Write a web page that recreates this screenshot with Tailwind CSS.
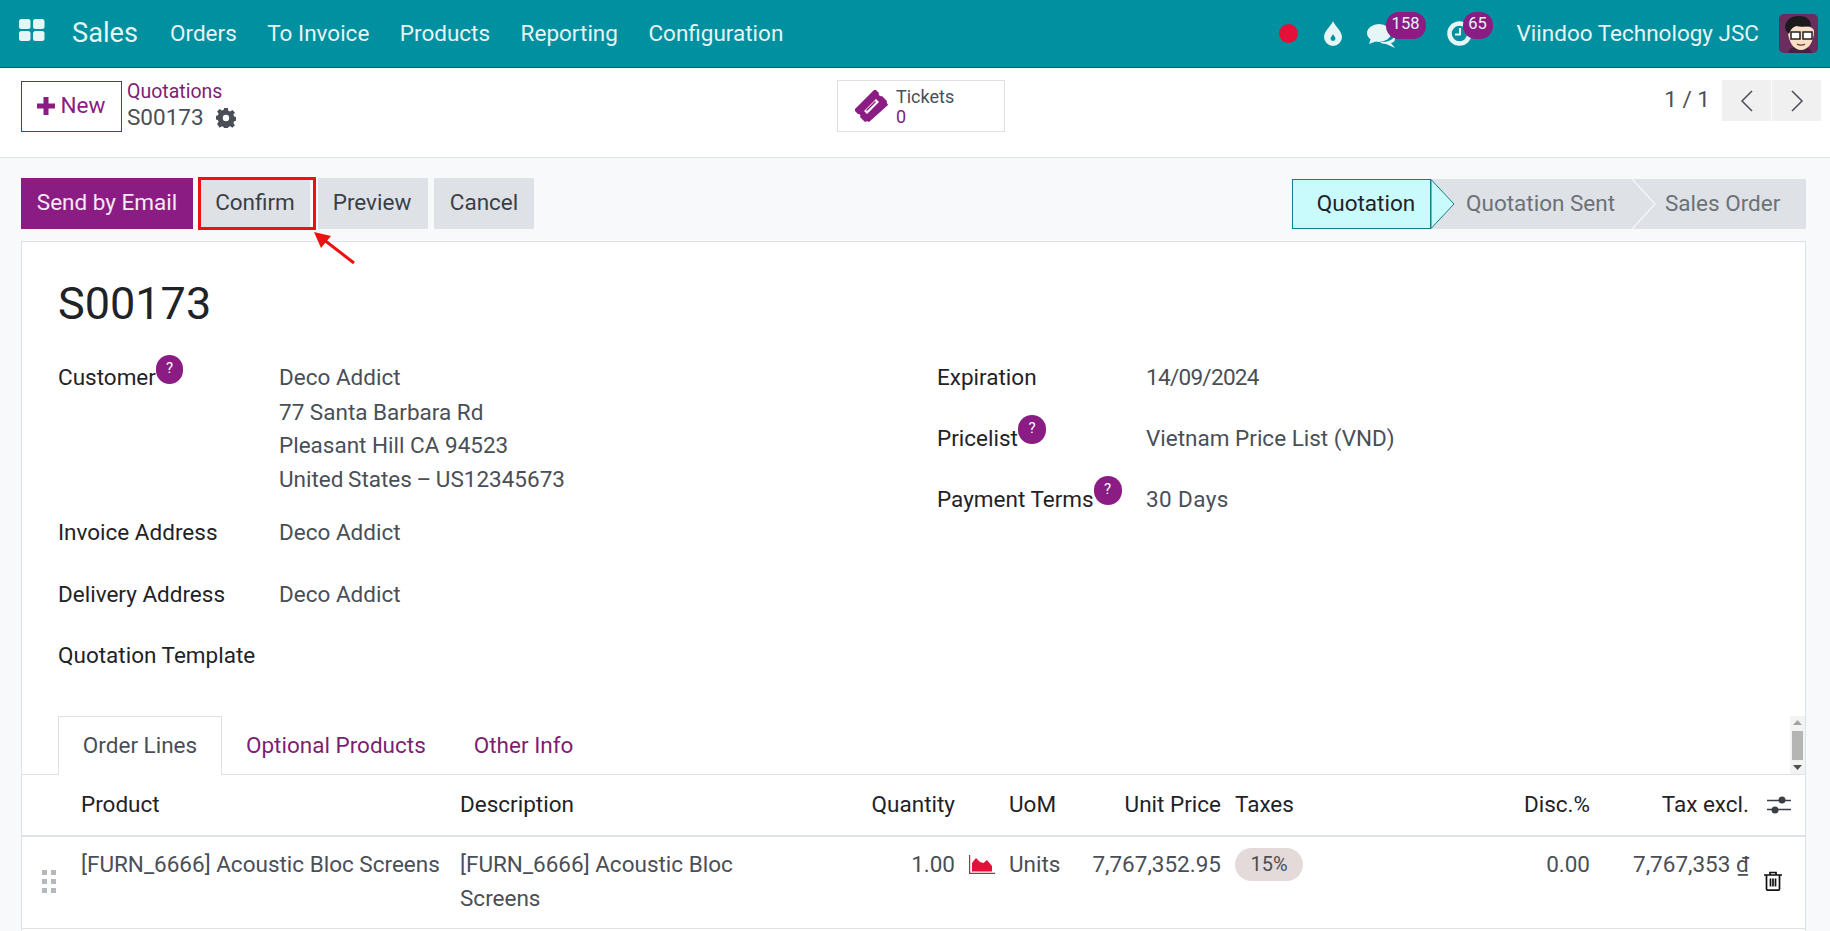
<!DOCTYPE html>
<html lang="en">
<head>
    <meta charset="UTF-8">
    <title>S00173 - Sales</title>
    <script src="https://cdn.jsdelivr.net/npm/@tailwindcss/browser@4"></script>
</head>
<body class="bg-[#f8f9fa] font-['Roboto',sans-serif] text-[22.5px] text-[#4a4f57] overflow-hidden h-[931px]">
    <!-- top menu -->
    <nav class="h-[68px] bg-[#00909f] border-b border-[#00606b] flex items-center text-[#e6f5f6]">
        <svg class="ml-[19px] w-[26px] h-[22px] -mt-[8px]" viewBox="0 0 26 22" fill="currentColor">
            <rect x="0" y="0" width="11.5" height="10" rx="2.5"/><rect x="14" y="0" width="11.5" height="10" rx="2.5"/>
            <rect x="0" y="12" width="11.5" height="10" rx="2.5"/><rect x="14" y="12" width="11.5" height="10" rx="2.5"/>
        </svg>
        <span class="ml-[27px] text-[27.2px]">Sales</span>
        <span class="ml-[32px]">Orders</span>
        <span class="ml-[30.5px]">To Invoice</span>
        <span class="ml-[30.5px]">Products</span>
        <span class="ml-[30.5px]">Reporting</span>
        <span class="ml-[30.5px]">Configuration</span>
        <span class="ml-auto w-[19px] h-[19px] rounded-full bg-[#e4103a]"></span>
        <svg class="ml-[26px] w-[18px] h-[25px] -mt-[1px]" viewBox="0 0 18 25" fill="currentColor"><path fill-rule="evenodd" d="M9 0c1 4 9 10 9 16a9 9 0 0 1-18 0C0 10 8 4 9 0zm0 13c-.5 1.500-2.500 3-2.500 4.500a2.500 2.500 0 0 0 5 0C11.500 16 9.500 14.500 9 13z"/></svg>
        <div class="relative ml-[25px] w-[30px] h-[26px] mt-[4px]">
            <svg class="w-[30px] h-[26px]" viewBox="0 0 30 26" fill="currentColor"><ellipse cx="12" cy="10" rx="12" ry="9"/><path d="M4 15l-2 6 8-3z"/><path d="M27 13c2 3 1 6-3 7l4 5-9-4c-3 0-5-1-6-2 8 0 13-2 14-6z"/></svg>
            <span class="absolute left-[19px] -top-[11px] w-[40px] h-[27px] rounded-[13px] bg-[#8a1c84] text-[16.5px] leading-[23px] text-center">158</span>
        </div>
        <div class="relative ml-[50px] w-[25px] h-[25px] mt-[-1px]">
            <svg class="w-[25px] h-[25px]" viewBox="0 0 25 25" fill="none" stroke="currentColor"><circle cx="12.500" cy="12.500" r="10" stroke-width="4.500"/><path d="M13 7v6.500H8" stroke-width="2"/></svg>
            <span class="absolute left-[16px] -top-[9px] w-[30px] h-[27px] rounded-[13px] bg-[#8a1c84] text-[16.5px] leading-[23px] text-center">65</span>
        </div>
        <span class="ml-[45px]">Viindoo Technology JSC</span>
        <svg class="ml-[20px] mr-[12px] w-[39px] h-[39px] rounded-[5px]" viewBox="0 0 39 39">
            <rect width="39" height="39" fill="#6b2c5e"/>
            <path d="M9 39c1-5 6-7 12-7s11 2 12 7z" fill="#4a2040"/>
            <path d="M9 17c0 11 6 19 13 19s13-8 13-19c0-7-26-7-26 0z" fill="#f8dfc6"/>
            <path d="M6 13C7 5 13 2 20 2c7 0 12 3 12 10-5 1-11 1-15 0-3 1-5 3-7 8-2-2-4-4-4-7z" fill="#1d1a1e"/>
            <rect x="12" y="18" width="9" height="7" fill="#fff" stroke="#222" stroke-width="1.500"/>
            <rect x="24" y="18" width="9" height="7" fill="#fff" stroke="#222" stroke-width="1.500"/>
            <path d="M18 30c2 1.500 6 1.500 8 0" fill="none" stroke="#6b3a2a" stroke-width="1.200"/>
        </svg>
    </nav>

    <!-- control panel -->
    <div class="h-[90px] bg-white border-b border-[#dee2e6] flex items-start pl-[21px] pr-[9px]">
        <button class="mt-[13px] w-[101px] h-[51px] border border-[#8a1c84] text-[#8a1c84] flex items-center justify-center gap-[6px] pb-[2px]">
            <svg class="w-[18px] h-[18px] -ml-[1px]" viewBox="0 0 18 18" fill="currentColor"><path d="M6.500 0h5v6.500H18v5h-6.500V18h-5v-6.500H0v-5h6.500z"/></svg>
            New
        </button>
        <div class="ml-[5px] mt-[9px] w-[710px]">
            <div class="text-[#7c1f72] text-[19.5px] leading-[28px] pt-[1px]">Quotations</div>
            <div class="flex items-center gap-[12px] leading-[27px] -mt-[2px]">S00173
                <svg class="w-[20px] h-[20px] text-[#4a4f57]" viewBox="0 0 20 20" fill="currentColor"><path fill-rule="evenodd" d="M8.200 0h3.600l.5 2.700 1.800.8L16.400 2l2.500 2.500-1.500 2.300.8 1.800 2.700.5v3.600l-2.700.5-.8 1.800 1.500 2.300-2.500 2.500-2.300-1.500-1.800.8-.5 2.700H8.200l-.5-2.700-1.800-.8-2.300 1.500L1.100 16l1.500-2.300-.8-1.800L-.9 11.400V8l2.700-.5.8-1.800L1.100 3.400 3.600 1l2.300 1.500 1.800-.8zM10 6.800a3.200 3.200 0 1 0 0 6.400 3.200 3.200 0 0 0 0-6.400z"/></svg>
            </div>
        </div>
        <div class="mt-[12px] w-[168px] h-[52px] border border-[#dee2e6] flex items-center pl-[17px]">
            <svg class="w-[33px] h-[33px] text-[#8a1c84]" viewBox="0 0 33 33" fill="currentColor"><path fill-rule="evenodd" d="M21 0l3 3c-1 2 1 4 3 3l5 5c-1 2 1 3 1 4L14 32c-1-1-3-1-4 0l-5-5c1-2 0-3-2-3l-3-3c-.5-.5-.5-1 0-2L19 0c.5-.5 1.500-.5 2 0zM21 9L9 21l3 3 12-12zm0 3l-9 9-1-1 9-9z"/></svg>
            <div class="ml-[8px] text-[18px] leading-[20px] pt-[1px]">
                <div>Tickets</div>
                <div class="text-[#7c1f72]">0</div>
            </div>
        </div>
        <div class="ml-auto mt-[12px] flex items-center gap-[1px]">
            <span class="mr-[11px] -mt-[2px]">1 / 1</span>
            <span class="w-[49px] h-[41px] bg-[#f0f0f0] flex items-center justify-center">
                <svg class="w-[14px] h-[22px]" viewBox="0 0 14 22" fill="none" stroke="#4a4f57" stroke-width="1.500"><path d="M12 1L2 11l10 10"/></svg>
            </span>
            <span class="w-[49px] h-[41px] bg-[#f0f0f0] flex items-center justify-center">
                <svg class="w-[14px] h-[22px]" viewBox="0 0 14 22" fill="none" stroke="#4a4f57" stroke-width="1.500"><path d="M2 1l10 10L2 21"/></svg>
            </span>
        </div>
    </div>

    <!-- action buttons and status -->
    <div class="h-[83px] pl-[21px] pr-[24px] pt-[20px] flex items-start">
        <button class="w-[172px] h-[51px] bg-[#8a1c84] text-[#f6e9f5] pb-[2px]">Send by Email</button>
        <div class="relative ml-[7px] w-[110px] h-[51px] bg-[#dee2e6] flex items-center justify-center text-[#3a3f46] pb-[2px]">Confirm
            <span class="absolute -left-[2px] -top-[1px] -right-[6px] -bottom-[1px] border-[3px] border-[#f01010]"></span>
        </div>
        <button class="ml-[8px] w-[110px] h-[51px] bg-[#dee2e6] text-[#3a3f46] pb-[2px] pr-[2px]">Preview</button>
        <button class="ml-[6px] w-[100px] h-[51px] bg-[#dee2e6] text-[#3a3f46] pb-[2px]">Cancel</button>
        <div class="ml-auto mt-[1px] relative h-[50px] w-[514px] flex items-center bg-[#dee2e6] text-[#6c7178]">
            <span class="absolute left-0 top-0 w-[139px] h-[50px] bg-[#c9fbfd] border border-[#0f7f8c] flex items-center justify-center text-[#1f2328] pl-[9px]">Quotation</span>
            <svg class="absolute left-[139px] top-0 w-[24px] h-[50px]" viewBox="0 0 24 50"><path d="M0 0.500L23 25 0 49.500z" fill="#c9fbfd" stroke="#0f7f8c"/></svg>
            <svg class="absolute left-[340px] top-0 w-[24px] h-[50px]" viewBox="0 0 24 50"><path d="M0 0L23 25 0 50" fill="none" stroke="#f4f5f6" stroke-width="1.500"/></svg>
            <span class="absolute left-[174px]">Quotation Sent</span>
            <span class="absolute left-[373px]">Sales Order</span>
        </div>
    </div>

    <!-- form sheet -->
    <div class="ml-[21px] mr-[24px] bg-white border border-[#dee2e6] border-b-0 h-[700px]">
        <h1 class="pl-[36px] pt-[30px] text-[45px] leading-[64px] text-[#1f2328]">S00173</h1>
        <div class="grid grid-cols-[879px_1fr] pl-[36px] h-[380px] content-start">
            <div class="pt-[24px]">
                <div class="grid grid-cols-[221px_1fr]">
                    <div class="relative w-fit text-[#1f2328] h-[34px] leading-[34px]">Customer
                        <span class="absolute left-full -top-[5px] w-[27px] h-[29px] rounded-full bg-[#8a1c84] text-white text-[15px] leading-[27px] text-center">?</span>
                    </div>
                    <div class="leading-[34px]">
                        <div>Deco Addict</div>
                        <div class="mt-[1px]">77 Santa Barbara Rd</div>
                        <div class="-mt-[1px]">Pleasant Hill CA 94523</div>
                        <div class="[word-spacing:-1px]">United States – US12345673</div>
                    </div>
                    <div class="mt-[19px] text-[#1f2328] leading-[34px]">Invoice Address</div>
                    <div class="mt-[19px] leading-[34px]">Deco Addict</div>
                    <div class="mt-[28px] text-[#1f2328] leading-[34px]">Delivery Address</div>
                    <div class="mt-[28px] leading-[34px]">Deco Addict</div>
                    <div class="mt-[27px] text-[#1f2328] leading-[34px]">Quotation Template</div>
                </div>
            </div>
            <div class="pt-[24px] grid grid-cols-[209px_1fr] auto-rows-[61px] content-start">
                <div class="text-[#1f2328] leading-[34px]">Expiration</div>
                <div class="leading-[34px] tracking-[-0.7px]">14/09/2024</div>
                <div class="relative w-fit h-[34px] text-[#1f2328] leading-[34px]">Pricelist
                    <span class="absolute left-full -top-[6px] w-[28px] h-[29px] rounded-full bg-[#8a1c84] text-white text-[15px] leading-[27px] text-center">?</span>
                </div>
                <div class="leading-[34px]">Vietnam Price List (VND)</div>
                <div class="relative w-fit h-[34px] text-[#1f2328] leading-[34px]">Payment Terms
                    <span class="absolute left-full -top-[6px] w-[28px] h-[29px] rounded-full bg-[#8a1c84] text-white text-[15px] leading-[27px] text-center">?</span>
                </div>
                <div class="leading-[34px] tracking-[0.4px]">30 Days</div>
            </div>
        </div>

        <!-- tabs -->
        <div class="relative h-[59px] border-b border-[#dee2e6] flex items-end pl-[36px]">
            <span class="relative -mb-[1px] w-[164px] h-[59px] bg-white border border-b-0 border-[#dee2e6] flex items-center justify-center">Order Lines</span>
            <span class="ml-[24px] h-[58px] pt-[1px] flex items-center text-[#7c1f72]">Optional Products</span>
            <span class="ml-[48px] h-[58px] pt-[1px] flex items-center text-[#7c1f72]">Other Info</span>
            <div class="absolute right-0 top-0 w-[15px] h-[58px] bg-[#f3f3f3] flex flex-col items-center justify-between py-[4px]">
                <svg class="w-[9px] h-[5px]" viewBox="0 0 9 5" fill="#a3a3a3"><path d="M4.500 0L9 5H0z"/></svg>
                <span class="w-[11px] h-[29px] bg-[#b5b5b5]"></span>
                <svg class="w-[9px] h-[5px]" viewBox="0 0 9 5" fill="#505050"><path d="M0 0h9L4.500 5z"/></svg>
            </div>
        </div>

        <!-- order lines -->
        <table class="w-full table-fixed">
            <colgroup>
                <col class="w-[59px]"><col class="w-[379px]"><col class="w-[316px]"><col class="w-[185px]"><col class="w-[91px]"><col class="w-[183px]"><col class="w-[186px]"><col class="w-[169px]"><col class="w-[159px]"><col>
            </colgroup>
            <thead>
                <tr class="h-[61px] border-b-2 border-[#dee2e6] text-[#1f2328]">
                    <th></th>
                    <th class="font-normal text-left">Product</th>
                    <th class="font-normal text-left">Description</th>
                    <th class="font-normal text-right pr-[6px]">Quantity</th>
                    <th class="font-normal text-left pl-[48px]">UoM</th>
                    <th class="font-normal text-right pr-[14px]">Unit Price</th>
                    <th class="font-normal text-left">Taxes</th>
                    <th class="font-normal text-right">Disc.%</th>
                    <th class="font-normal text-right">Tax excl.</th>
                    <th>
                        <svg class="ml-[18px] w-[24px] h-[20px]" viewBox="0 0 24 20" stroke="#3a3f46" fill="#3a3f46"><path d="M0 5.500h24M0 14.500h24" stroke-width="1.500"/><circle cx="15" cy="5" r="3.500" stroke="none"/><circle cx="8" cy="15" r="3.500" stroke="none"/></svg>
                    </th>
                </tr>
            </thead>
            <tbody>
                <tr class="h-[92px] border-b border-[#dee2e6] align-top">
                    <td class="pt-[33px] pl-[20px]">
                        <svg class="w-[14px] h-[23px]" viewBox="0 0 14 23" fill="#b4b8bd"><rect width="5" height="5"/><rect x="9" width="5" height="5"/><rect y="9" width="5" height="5"/><rect x="9" y="9" width="5" height="5"/><rect y="18" width="5" height="5"/><rect x="9" y="18" width="5" height="5"/></svg>
                    </td>
                    <td class="pt-[10px] leading-[34px]">[FURN_6666] Acoustic Bloc Screens</td>
                    <td class="pt-[10px] leading-[34px] pr-[30px]">[FURN_6666] Acoustic Bloc Screens</td>
                    <td class="pt-[10px] leading-[34px] text-right pr-[6px]">1.00</td>
                    <td class="pt-[10px] leading-[34px] pl-[48px] relative">Units
                        <svg class="absolute left-[8px] top-[18px] w-[26px] h-[20px]" viewBox="0 0 26 20" fill="#e4103a"><path d="M0 0h1.200v17.800H26V19H0z"/><path d="M3 16.500V8l4-5 4 4 3.500 1 3.500-3 5 6v5.500z"/></svg>
                    </td>
                    <td class="pt-[10px] leading-[34px] text-right pr-[14px]">7,767,352.95</td>
                    <td class="pt-[10px]"><span class="inline-block w-[68px] h-[33px] rounded-full bg-[#e4dada] text-center text-[20px] leading-[33px]">15%</span></td>
                    <td class="pt-[10px] leading-[34px] text-right">0.00</td>
                    <td class="pt-[10px] leading-[34px] text-right">7,767,353 <span class="underline">₫</span></td>
                    <td class="pt-[34px]">
                        <svg class="ml-[15px] w-[18px] h-[20px]" viewBox="0 0 18 20" fill="none" stroke="#111" stroke-width="1.700"><path d="M0 4h18M6 4V1.500h6V4M2.500 4v14a1.200 1.200 0 0 0 1.200 1.200h10.600a1.200 1.200 0 0 0 1.200-1.200V4M6.500 7.500v8M9 7.500v8M11.500 7.500v8"/></svg>
                    </td>
                </tr>
            </tbody>
        </table>
    </div>
    <!-- arrow pointing at Confirm -->
    <svg class="absolute left-[311px] top-[231px] w-[50px] h-[40px]" viewBox="0 0 50 40" fill="none"><path d="M8 5l35 27" stroke="#ee1111" stroke-width="3"/><path d="M3 1l17 4-10 12z" fill="#ee1111"/></svg>
</body>
</html>
